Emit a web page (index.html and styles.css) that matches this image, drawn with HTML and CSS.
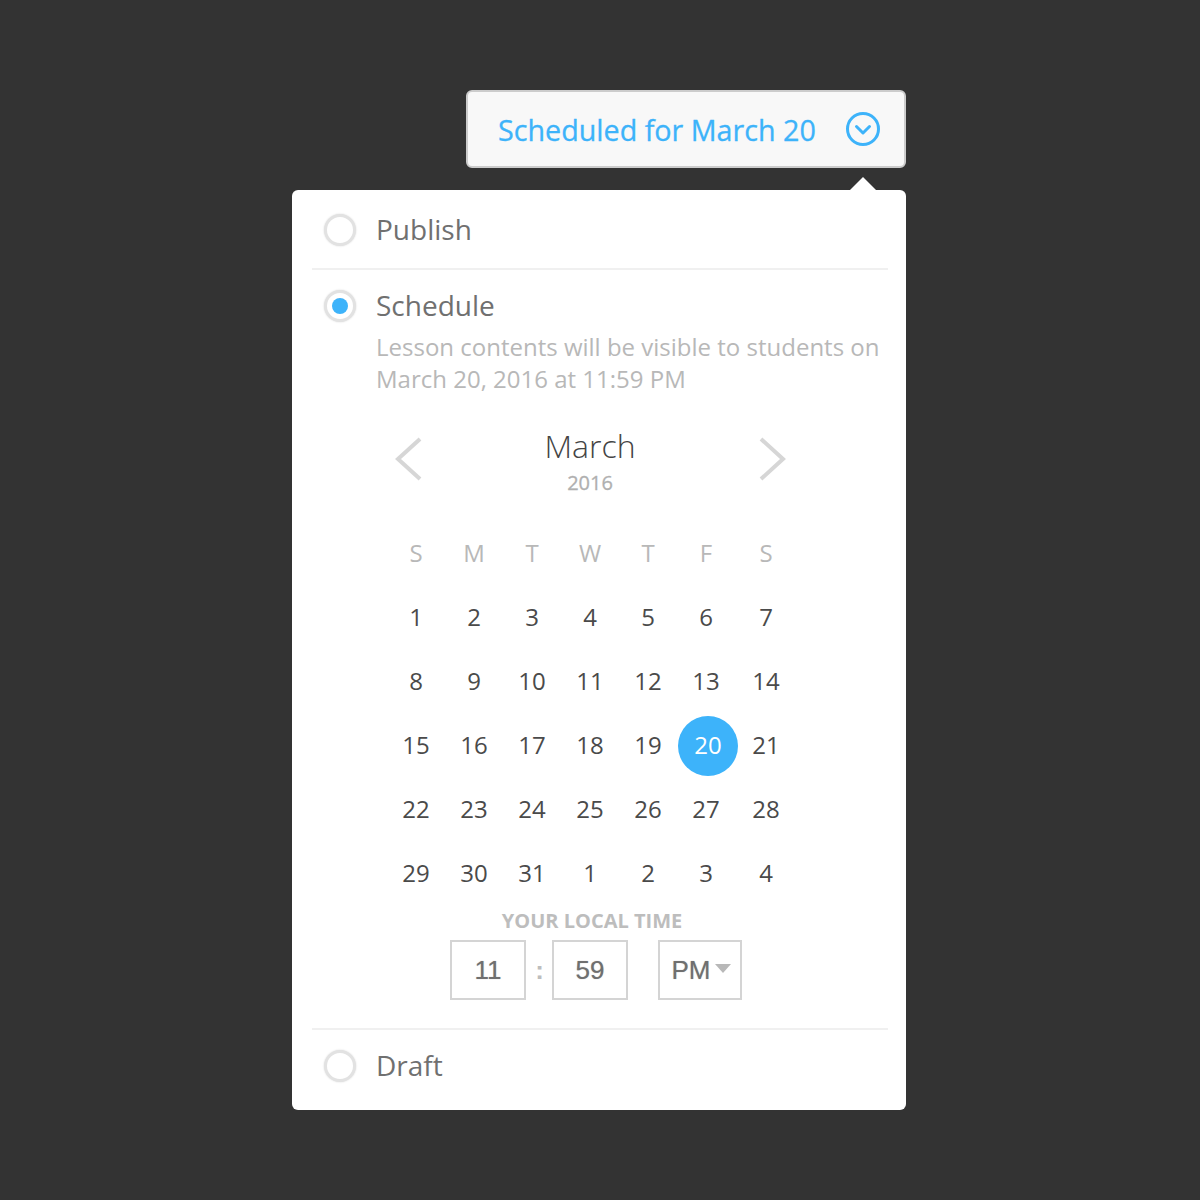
FILE: index.html
```html
<!DOCTYPE html>
<html lang="en">
<head>
  <meta charset="UTF-8">
  <meta name="viewport" content="width=device-width, initial-scale=1.0">
  <title>Schedule lesson</title>
  <link rel="stylesheet" href="styles.css">
</head>
<body>
  <div class="wrap">
    <button class="trigger" type="button">
      <span>Scheduled for March 20</span>
      <svg class="trigger-icon" width="36" height="36" viewBox="0 0 36 36" fill="none" stroke="#3db3fa" stroke-width="3">
        <circle cx="18" cy="18" r="15.5"/>
        <path d="M11.5 15.5 18 22l6.5-6.5" stroke-linecap="round" stroke-linejoin="round"/>
      </svg>
    </button>

    <div class="panel">
      <div class="option option-first">
        <span class="radio"></span>
        <span class="option-label">Publish</span>
      </div>

      <div class="option-block">
        <div class="option">
          <span class="radio radio-on"></span>
          <span class="option-label">Schedule</span>
        </div>
        <p class="note">Lesson contents will be visible to students on<br>March 20, 2016 at 11:59 PM</p>

        <div class="cal-head">
          <svg class="cal-arrow" width="28" height="44" viewBox="0 0 28 44" fill="none" stroke="#d6d6d6" stroke-width="4">
            <path d="M26 2 4 22l22 20"/>
          </svg>
          <div class="cal-title">
            <div class="month">March</div>
            <div class="year">2016</div>
          </div>
          <svg class="cal-arrow" width="28" height="44" viewBox="0 0 28 44" fill="none" stroke="#d6d6d6" stroke-width="4">
            <path d="M3 2l22 20L3 42"/>
          </svg>
        </div>

        <div class="cal-grid">
          <div class="dow">S</div><div class="dow">M</div><div class="dow">T</div><div class="dow">W</div><div class="dow">T</div><div class="dow">F</div><div class="dow">S</div>
          <div class="day">1</div><div class="day">2</div><div class="day">3</div><div class="day">4</div><div class="day">5</div><div class="day">6</div><div class="day">7</div>
          <div class="day">8</div><div class="day">9</div><div class="day">10</div><div class="day">11</div><div class="day">12</div><div class="day">13</div><div class="day">14</div>
          <div class="day">15</div><div class="day">16</div><div class="day">17</div><div class="day">18</div><div class="day">19</div><div class="day selected"><span>20</span></div><div class="day">21</div>
          <div class="day">22</div><div class="day">23</div><div class="day">24</div><div class="day">25</div><div class="day">26</div><div class="day">27</div><div class="day">28</div>
          <div class="day">29</div><div class="day">30</div><div class="day">31</div><div class="day">1</div><div class="day">2</div><div class="day">3</div><div class="day">4</div>
        </div>

        <div class="time-label">YOUR LOCAL TIME</div>
        <div class="time-row">
          <div class="time-box">11</div>
          <div class="time-sep">:</div>
          <div class="time-box">59</div>
          <div class="time-box time-ampm">PM<span class="caret"></span></div>
        </div>
      </div>

      <div class="option option-last">
        <span class="radio"></span>
        <span class="option-label">Draft</span>
      </div>
    </div>
  </div>
</body>
</html>
```
FILE: styles.css
```css
* {
  box-sizing: border-box;
}

body {
  margin: 0;
  height: 1200px;
  background: #333333;
  font-family: "Open Sans", sans-serif;
  overflow: hidden;
}

.wrap {
  display: flex;
  flex-direction: column;
  align-items: flex-end;
  width: 614px;
  margin-left: 292px;
  padding-top: 90px;
}

.trigger {
  display: flex;
  align-items: center;
  justify-content: space-between;
  width: 440px;
  height: 78px;
  padding: 0 23px 0 30px;
  background: #f8f8f8;
  border: 2px solid #cccccc;
  border-radius: 6px;
  color: #3db3fa;
  font-family: "Open Sans", sans-serif;
  font-size: 28.7px;
  font-weight: 400;
  -webkit-text-stroke: 0.3px #3db3fa;
}

.panel {
  position: relative;
  width: 614px;
  height: 920px;
  margin-top: 22px;
  padding: 0 18px 0 20px;
  background: #ffffff;
  border-radius: 6px;
}

/* little pointer up to the trigger */
.panel::before {
  content: "";
  position: absolute;
  top: -13px;
  left: 558px;
  width: 0;
  height: 0;
  border-left: 13.5px solid transparent;
  border-right: 13.5px solid transparent;
  border-bottom: 13px solid #ffffff;
}

.option {
  display: flex;
  align-items: center;
  height: 32px;
  padding-left: 12px;
}

.option-first {
  height: 78px;
  padding-top: 2px;
}

.option-block {
  height: 762px;
  padding-top: 20px;
  border-top: 2px solid #f0f0f0;
  border-bottom: 2px solid #f0f0f0;
}

.option-last {
  height: 72px;
}

.radio {
  flex: none;
  position: relative;
  width: 32px;
  height: 32px;
  margin-right: 20px;
  background: #ffffff;
  border: 3px solid #e2e2e2;
  border-radius: 50%;
  box-shadow: 0 0 2px #d8d8d8;
}

.radio-on::after {
  content: "";
  position: absolute;
  top: 5px;
  left: 5px;
  width: 16px;
  height: 16px;
  background: #3db3fa;
  border-radius: 50%;
}

.option-label {
  margin-top: -2px;
  color: #707070;
  font-size: 28px;
}

.note {
  margin: 9px 0 0 64px;
  color: #b8b8b8;
  font-size: 24px;
  line-height: 32px;
  white-space: nowrap;
}

.cal-head {
  display: flex;
  align-items: center;
  justify-content: space-between;
  width: 392px;
  margin: 31px 0 0 82px;
}

.cal-arrow {
  margin-bottom: 6px;
}

.cal-title {
  text-align: center;
}

.month {
  color: #444444;
  font-size: 32px;
  font-weight: 300;
  line-height: 40px;
}

.year {
  margin-top: 3px;
  color: #b0b0b0;
  font-size: 20px;
  line-height: 28px;
  -webkit-text-stroke: 0.3px #b0b0b0;
}

.cal-grid {
  display: grid;
  grid-template-columns: repeat(6, 58px) 62px;
  grid-auto-rows: 64px;
  margin: 23px 0 0 75px;
}

.dow,
.day {
  display: flex;
  align-items: center;
  justify-content: center;
  font-size: 24px;
}

.dow {
  color: #b8b8b8;
}

.day {
  color: #4a4a4a;
}

.selected span {
  position: relative;
  top: 2px;
  left: 2px;
  display: flex;
  flex: none;
  align-items: center;
  justify-content: center;
  width: 60px;
  height: 60px;
  padding-bottom: 4px;
  background: #3db3fa;
  border-radius: 50%;
  color: #ffffff;
}

.time-label {
  margin-top: 3px;
  width: 560px;
  color: #bdbdbd;
  font-size: 20px;
  font-weight: 700;
  line-height: 28px;
  text-align: center;
}

.time-row {
  display: flex;
  align-items: center;
  margin: 5px 0 0 138px;
}

.time-box {
  display: flex;
  align-items: center;
  justify-content: center;
  width: 76px;
  height: 60px;
  border: 2px solid #d4d4d4;
  color: #6f6f6f;
  font-family: "Liberation Sans", sans-serif;
  font-size: 26px;
  text-shadow: 0 0 1px rgba(110, 110, 110, 0.6);
}

.time-sep {
  width: 26px;
  padding-left: 1px;
  color: #bdbdbd;
  font-family: "Liberation Sans", sans-serif;
  font-size: 26px;
  font-weight: 700;
  text-align: center;
}

.time-ampm {
  width: 84px;
  margin-left: 30px;
  padding-left: 2px;
}

.caret {
  width: 0;
  height: 0;
  margin: -3px 0 0 4px;
  border-left: 8px solid transparent;
  border-right: 8px solid transparent;
  border-top: 9px solid #b8b8b8;
}
```
